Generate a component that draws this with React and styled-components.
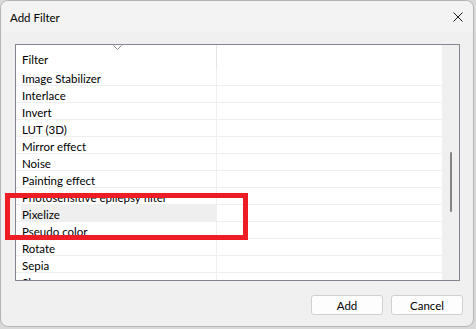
import React from 'react';
import styled, { createGlobalStyle } from 'styled-components';

const GlobalStyle = createGlobalStyle`
  html, body {
    margin: 0;
    padding: 0;
    background: #d9d9d9;
  }
  body {
    font-family: Lato, "Noto Sans", sans-serif;
    font-size: 11.5px;
    color: #000;
  }
`

const filters = [
  'Image Stabilizer',
  'Interlace',
  'Invert',
  'LUT (3D)',
  'Mirror effect',
  'Noise',
  'Painting effect',
  'Photosensitive epilepsy filter',
  'Pixelize',
  'Pseudo color',
  'Rotate',
  'Sepia',
  'Sharpen',
]

const Dialog = styled.div`
  position: relative;
  width: 474px;
  height: 327px;
  box-sizing: border-box;
  border: 1px solid #b4b4b4;
  border-radius: 8px;
  background: #f0f0f0;
  overflow: hidden;
  display: flex;
  flex-direction: column;
`

const TitleBar = styled.header`
  height: 31px;
  flex-shrink: 0;
  background: #f3f3f3;
  display: flex;
  align-items: center;
  justify-content: space-between;
  padding: 0 9px 0 9px;
  box-sizing: border-box;
`

const Title = styled.span`
  font-size: 11.5px;
  padding-top: 1px;
`

const CloseIcon = styled.svg`
  width: 10px;
  height: 10px;
  margin-right: 1px;
`

const Body = styled.main`
  flex: 1;
  display: flex;
  flex-direction: column;
  padding: 12px 0 0 14px;
`

const ListView = styled.section`
  width: 445px;
  height: 237px;
  flex-shrink: 0;
  box-sizing: border-box;
  border: 1px solid #82878f;
  background: #fff;
  display: flex;
`

const Columns = styled.div`
  flex: 1;
  display: flex;
  flex-direction: column;
  overflow: hidden;
`

const HeaderRow = styled.div`
  position: relative;
  height: 24px;
  flex-shrink: 0;
  display: grid;
  grid-template-columns: 201px 1fr;
`

const HeaderCell = styled.div`
  padding: 8px 0 0 6px;
  border-right: ${p => (p.$divider ? '1px solid #e5e5e5' : 'none')};
`

const SortChevron = styled.svg`
  position: absolute;
  left: 97px;
  top: 0px;
  width: 9px;
  height: 5px;
`

const Rows = styled.div`
  flex: 1;
  overflow: hidden;
`

const Row = styled.div`
  height: 17px;
  box-sizing: border-box;
  display: grid;
  grid-template-columns: 201px 1fr;
  border-bottom: 1px solid #efefef;
`

const Cell = styled.div`
  line-height: 15px;
  padding-top: 2px;
  white-space: nowrap;
  background: ${p => (p.$selected ? '#efefef' : 'transparent')};
  border-right: ${p => (p.$divider ? '1px solid #efefef' : 'none')};
  margin-left: ${p => (p.$selected ? '5px' : '0')};
  padding-left: ${p => (p.$selected ? '1px' : '6px')};
`

const ScrollTrack = styled.div`
  width: 17px;
  flex-shrink: 0;
  background: #f0f0f0;
  display: flex;
  justify-content: center;
  padding-top: 107px;
  box-sizing: border-box;
`

const ScrollThumb = styled.div`
  width: 2px;
  height: 60px;
  border-radius: 1px;
  background: #858585;
  margin-left: 1px;
`

const ButtonBar = styled.footer`
  display: flex;
  justify-content: flex-end;
  gap: 8px;
  padding: 14px 10px 0 0;
`

const Button = styled.button`
  width: 72px;
  height: 20px;
  box-sizing: border-box;
  border: 1px solid #d0d0d0;
  border-radius: 3px;
  background: #fdfdfd;
  font-family: inherit;
  font-size: 11.5px;
  color: #000;
  padding: 0;
`

const Highlight = styled.div`
  position: absolute;
  left: 4px;
  top: 192px;
  width: 243px;
  height: 47px;
  box-sizing: border-box;
  border: 5.5px solid #ee1c25;
  pointer-events: none;
`

export default function App() {
  return (
    <>
      <GlobalStyle />
      <Dialog>
        <TitleBar>
          <Title>Add Filter</Title>
          <CloseIcon viewBox="0 0 10 10">
            <path d="M0.5 0.5 L9.5 9.5 M9.5 0.5 L0.5 9.5" stroke="#1a1a1a" strokeWidth="1" fill="none" />
          </CloseIcon>
        </TitleBar>
        <Body>
          <ListView>
            <Columns>
              <HeaderRow>
                <HeaderCell $divider>Filter</HeaderCell>
                <HeaderCell />
                <SortChevron viewBox="0 0 9 5">
                  <path d="M0.5 0.5 L4.5 4.5 L8.5 0.5" stroke="#8a8a8a" strokeWidth="1" fill="none" />
                </SortChevron>
              </HeaderRow>
              <Rows>
                {filters.map(name => (
                  <Row key={name}>
                    <Cell $divider $selected={name === 'Pixelize'}>{name}</Cell>
                    <Cell />
                  </Row>
                ))}
              </Rows>
            </Columns>
            <ScrollTrack>
              <ScrollThumb />
            </ScrollTrack>
          </ListView>
          <ButtonBar>
            <Button>Add</Button>
            <Button>Cancel</Button>
          </ButtonBar>
        </Body>
        <Highlight />
      </Dialog>
    </>
  );
}
